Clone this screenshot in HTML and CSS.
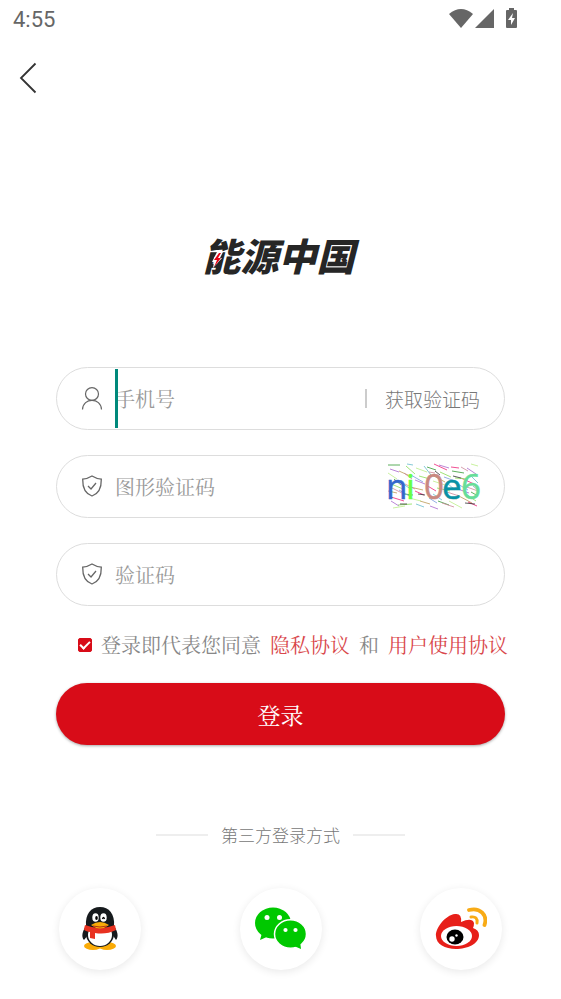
FILE: index.html
```
<!DOCTYPE html>
<html lang="zh-CN">
<head>
  <meta charset="UTF-8">
  <meta name="viewport" content="width=device-width,initial-scale=1.0">
  <title>能源中国 - 登录</title>
  <link rel="stylesheet" href="styles.css">
</head>
<body>
  <div class="status">
    <span class="time">4:55</span>
    <svg class="status-icons" width="70" height="22" viewBox="0 0 70 22" fill="#666">
      <path d="M0 6 Q12 -4 24 6 L12 20 Z"/>
      <path d="M45 1 V20 H26 Z"/>
      <path fill-rule="evenodd" d="M60 0h5v2h2q1 0 1 1v16q0 1-1 1h-9q-1 0-1-1V3q0-1 1-1h2zM64 5l-5 7h3v5l4-7h-3z"/>
    </svg>
  </div>

  <header class="nav">
    <a href="#" class="back" aria-label="返回">
      <svg width="18" height="32" viewBox="0 0 18 32" fill="none" stroke="#333" stroke-width="1.800"><path d="M16.500 1.500 2 16l14.500 14.500"/></svg>
    </a>
  </header>

  <main>
    <h1 class="logo">能源中国
      <svg class="bolt" width="11" height="16" viewBox="-1 -1 11 16"><path fill="#fff" d="M4-1H10L7 5h2L0 15l1-6H-1z"/><path fill="#e60012" d="M6 0 1 7h3l-3 7 7-9H5l3-5z"/></svg>
    </h1>

    <form onsubmit="return false">
      <div class="field">
        <svg class="icon" width="22" height="24" viewBox="0 0 22 24" fill="none" stroke="#666" stroke-width="1.200"><ellipse cx="11" cy="7" rx="6.500" ry="6.300"/><path d="M1.500 22.500C2 10.300 20 10.300 20.500 22.500"/></svg>
        <input type="tel" placeholder="手机号" aria-label="手机号">
        <span class="caret"></span>
        <button type="button" class="send">获取验证码</button>
      </div>

      <div class="field">
        <svg class="icon" width="22" height="24" viewBox="0 0 22 24" fill="none" stroke="#666" stroke-width="1.300"><path d="M11 1Q6 4 1.700 4.200C1.500 13 4 18.500 11 21 18 18.500 20.500 13 20.300 4.200Q16 4 11 1Z"/><path d="m7 11 3 3 5-6"/></svg>
        <input type="text" placeholder="图形验证码" aria-label="图形验证码">
        <svg class="captcha" width="93" height="48" viewBox="0 0 93 48" role="img" aria-label="图形验证码图片">
          <g fill="none" stroke-width="0.800">
            <path stroke="#393" d="M1 2h12M40 4l9 3M65 8l12 2M7 16l7 6M51 38l11 4M84 29l7 4M17 31l9 1"/>
            <path stroke="#a6c" d="M3 6l9 3M28 17l10 4M52 2l10 3M4 38l8 5M68 25l14 5M43 43l8 3M80 5l9 6"/>
            <path stroke="#b95" d="M12 8l11 5M23 24l13 3M45 12l13 7M70 32l15 8M1 28l9 2M60 34l10 2M33 38l10 3"/>
            <path stroke="#e27" d="M47 1l13 6M74 15l13 6M4 34l13 4M28 28l9 4M39 22l10 6M81 39l9 4M64 4l8 1"/>
            <path stroke="#6bc" d="M20 1l6 1M37 3l7 9M60 20l8 7M12 18l13 9M84 13l7 7M29 41l8 3M46 31l9 6"/>
            <path stroke="#8d5" d="M19 3l9 8M32 13l11 3M53 9l11 5M68 15l13 1M11 42l14-1M77 30l12 8M2 20l14 6M50 25l13 3"/>
            <path stroke="#333" d="M48 8l5 4M13 41h7M78 40l10 1M66 13l8 2M31 31l7 1"/>
            <path stroke="#c89" d="M17 10l8 6M42 9l6 1M18 21l10 5M77 23l14 5M55 40l12 4M3 24l12 6M74 4l7 4M60 29l12 4"/>
            <path stroke="#be8" d="M1 10l9 6M29 5l11 4M46 18l12 4M62 38l13 7M22 35l12 3M84 1l7 2M6 45l12-2"/>
            <path stroke="#79d" d="M24 12l12 7M69 20l12 7M12 27l12 7M42 35l8 5M86 23l6 5M57 14l11 4"/>
          </g>
          <g class="captcha-text">
            <text x="-1" y="36" fill="#36c" stroke="#36c">n</text>
            <text x="19" y="36" fill="#6f4" stroke="#6f4">i</text>
            <text x="37" y="36" fill="#c98880" stroke="#c98880">0</text>
            <text x="55" y="36" fill="#0891a5" stroke="#0891a5">e</text>
            <text x="74" y="36" fill="#6d9" stroke="#6d9">6</text>
          </g>
        </svg>
      </div>

      <div class="field">
        <svg class="icon" width="22" height="24" viewBox="0 0 22 24" fill="none" stroke="#666" stroke-width="1.300"><path d="M11 1Q6 4 1.700 4.200C1.500 13 4 18.500 11 21 18 18.500 20.500 13 20.300 4.200Q16 4 11 1Z"/><path d="m7 11 3 3 5-6"/></svg>
        <input type="text" placeholder="验证码" aria-label="验证码">
      </div>

      <div class="agree">
        <input type="checkbox" id="agree" checked>
        <label for="agree">登录即代表您同意</label>
        <a href="#">隐私协议</a>
        <span>和</span>
        <a href="#">用户使用协议</a>
      </div>

      <button type="submit" class="login">登录</button>
    </form>

    <div class="other">第三方登录方式</div>

    <div class="social">
      <button type="button" aria-label="QQ">
        <svg width="52" height="52" viewBox="0 0 52 52">
          <path fill="#161a1d" d="M14 21C8 27 7 34 10 37l4-5 24-1 4 6c3-3 2-10-4-16z"/>
          <ellipse cx="19" cy="43" rx="9" ry="4" fill="#faab07"/><ellipse cx="33" cy="43" rx="9" ry="4" fill="#faab07"/>
          <ellipse cx="26" cy="31" rx="14" ry="13" fill="#161a1d"/>
          <ellipse cx="26" cy="32" rx="12" ry="11" fill="#fff"/>
          <path fill="#161a1d" d="M12 23C11 11 17 4 26 4s15 7 14 19q-14 7-28 0z"/>
          <path fill="#e83220" d="M11 22q15 6 30 0l1 5Q32 32 21 30v6l-5-1v-6q-6-1-6-3z"/>
          <ellipse cx="21.500" cy="14.500" rx="3.200" ry="4.300" fill="#fff"/><ellipse cx="29.500" cy="14.500" rx="3.200" ry="4.300" fill="#fff"/>
          <ellipse cx="22.500" cy="15" rx="1.300" ry="2"/><path fill="none" stroke="#000" stroke-width="1.300" d="M28.500 16q1-3 2 0"/>
          <path fill="#faab07" d="M17 22q9-6 18 0-9 7-18 0z"/><path fill="none" stroke="#b53712" d="M19 23q7 2 14 0"/>
        </svg>
      </button>
      <button type="button" aria-label="微信">
        <svg width="52" height="52" viewBox="0 0 52 52" fill="#00c800">
          <ellipse cx="18" cy="20" rx="18" ry="15.500"/><path d="M7 30 5 37l9-4z"/>
          <ellipse cx="35.500" cy="31" rx="16" ry="14.200" stroke="#fff" stroke-width="1.500"/>
          <path d="m39 43 7 3-1-8z"/>
          <g fill="#fff"><circle cx="12" cy="14.500" r="2.500"/><circle cx="24.500" cy="14.500" r="2.500"/><circle cx="30.500" cy="27" r="2.100"/><circle cx="40.500" cy="27" r="2.100"/></g>
        </svg>
      </button>
      <button type="button" aria-label="微博">
        <svg width="52" height="52" viewBox="0 0 52 52">
          <path fill="#e71f19" d="M1 33C0 26 10 12 20 11q7-1 6 8 11-5 13 1 0 3-1 5 6 2 6 7c0 9-12 14-23 14C10 46 1 41 1 33z"/>
          <ellipse cx="21.500" cy="33" rx="15.500" ry="10" fill="#fff"/>
          <ellipse cx="20" cy="34" rx="8.500" ry="7.500"/>
          <circle cx="17" cy="36" r="2.700" fill="#fff"/><circle cx="21.500" cy="32.500" r="1.200" fill="#fff"/>
          <g fill="none" stroke="#f8ab16" stroke-linecap="round"><path stroke-width="3.800" d="M34 7C45 4 53 12 49.500 22"/><path stroke-width="3" d="M36 14q7-1 6 6"/></g>
        </svg>
      </button>
    </div>
  </main>
</body>
</html>
```
FILE: styles.css
```
* {
  box-sizing: border-box;
}
body {
  margin: 0;
  background: #fff;
  color: #888;
  font-family: "Noto Serif CJK SC", "Noto Sans CJK SC", serif;
  font-size: 20px;
}
button {
  border: none;
  padding: 0;
  cursor: pointer;
}
a {
  color: #d9474b;
  text-decoration: none;
}
svg {
  display: block;
  flex-shrink: 0;
}
.status {
  display: flex;
  align-items: center;
  justify-content: space-between;
  height: 38px;
  padding: 0 42px 0 13px;
}
.time {
  font-family: Roboto, sans-serif;
  font-size: 22px;
  color: #666;
}
.nav {
  display: flex;
  align-items: center;
  height: 80px;
  padding: 0 19px;
}
.logo {
  position: relative;
  width: 156px;
  margin: 110px auto 0;
  color: #262626;
  font-family: "Noto Sans CJK SC", sans-serif;
  font-size: 38px;
  font-weight: 900;
  font-style: italic;
  line-height: 54px;
  white-space: nowrap;
}
.bolt {
  position: absolute;
  left: 9px;
  top: 24px;
}
form {
  display: flex;
  flex-direction: column;
  gap: 25px;
  margin: 85px 10% 0;
}
.field {
  position: relative;
  display: flex;
  align-items: center;
  height: 63px;
  padding: 0 24px;
  border: 1px solid #ddd;
  border-radius: 32px;
}
.field input {
  flex: 1;
  min-width: 0;
  height: 100%;
  margin-left: 12px;
  padding: 0;
  border: none;
  outline: none;
  background: none;
  color: #333;
  font-family: inherit;
  font-size: 20px;
}
.field input::placeholder {
  color: #999;
}
/* 输入光标 */
.caret {
  position: absolute;
  left: 58px;
  top: 1px;
  bottom: 1px;
  width: 3px;
  background: #00897b;
}
.send {
  display: flex;
  align-items: center;
  background: none;
  color: #777;
  font-family: "Noto Sans CJK SC", sans-serif;
  font-size: 19px;
  font-weight: 300;
  white-space: nowrap;
}
.send::before {
  content: "";
  width: 2px;
  height: 19px;
  margin-right: 18px;
  background: #ccc;
}
.captcha {
  overflow: visible;
}
.captcha-text {
  font-family: "Open Sans", sans-serif;
  font-size: 35px;
  stroke-width: 0.5px;
}
.agree {
  display: flex;
  align-items: center;
  gap: 9px;
  height: 27px;
  padding-left: 22px;
  white-space: nowrap;
}
.agree input {
  appearance: none;
  flex-shrink: 0;
  width: 14px;
  height: 14px;
  margin: 0;
  border: 1px solid #d80c18;
  border-radius: 2px;
}
.agree input:checked {
  background: #d80c18;
}
.agree input:checked::after {
  content: "";
  display: block;
  width: 8px;
  height: 4px;
  margin: 2px 1px;
  border: solid #fff;
  border-width: 0 0 2px 2px;
  transform: rotate(-45deg);
}
.login {
  height: 62px;
  border-radius: 31px;
  background: #d80c18;
  box-shadow: 0 1px 3px rgba(0,0,0,0.35);
  color: #fff;
  font-family: inherit;
  font-size: 23px;
}
.other {
  display: flex;
  align-items: center;
  justify-content: center;
  gap: 13px;
  margin-top: 76px;
  color: #777;
  font-family: "Noto Sans CJK SC", sans-serif;
  font-size: 17px;
  font-weight: 300;
  line-height: 28px;
}
.other::before,
.other::after {
  content: "";
  width: 52px;
  height: 2px;
  background: #eee;
}
.social {
  display: flex;
  justify-content: space-between;
  margin: 39px 10% 0;
  padding: 0 3px 28px;
}
.social button {
  display: flex;
  align-items: center;
  justify-content: center;
  width: 82px;
  height: 82px;
  border-radius: 50%;
  background: #fff;
  box-shadow: 0 2px 8px rgba(0,0,0,0.09);
}
```
